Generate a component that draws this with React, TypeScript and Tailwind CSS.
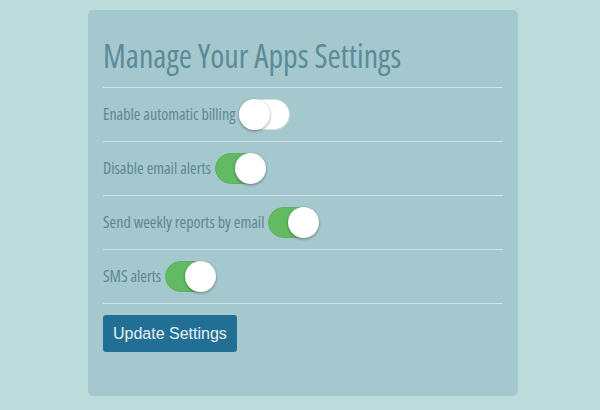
import { useState } from "react";

type Setting = { label: string; on: boolean };

const initial: Setting[] = [
  { label: "Enable automatic billing", on: false },
  { label: "Disable email alerts", on: true },
  { label: "Send weekly reports by email", on: true },
  { label: "SMS alerts", on: true },
];

function Toggle({ on, onClick }: { on: boolean; onClick: () => void }) {
  return (
    <button
      type="button"
      onClick={onClick}
      className={
        on
          ? "relative h-[31px] w-[51px] shrink-0 rounded-full border border-[#5bb25c] bg-[#62bb63]"
          : "relative h-[31px] w-[51px] shrink-0 rounded-full border border-[#dcdcdc] bg-white"
      }
    >
      <span
        className={
          on
            ? "absolute top-[-1px] right-[-1px] h-[31px] w-[31px] rounded-full bg-white shadow-[0_1px_3px_rgba(0,0,0,0.4)]"
            : "absolute top-[-1px] left-[-1px] h-[31px] w-[31px] rounded-full bg-white shadow-[0_1px_3px_rgba(0,0,0,0.4)]"
        }
      />
    </button>
  );
}

export default function App() {
  const [items, setItems] = useState(initial);

  return (
    <div className="min-h-[410px] bg-[#bcdbdb] pt-[10px] pl-[88px]">
      <div className="w-[430px] h-[386px] rounded-[5px] bg-[#a5c8ce] px-[15px] pt-[26px] font-['Open_Sans',sans-serif] [font-stretch:75%]">
        <h2 className="text-[32px] leading-[40px] pb-[11px] text-[#5a8b97] border-b border-[#cfe4e6]">
          Manage Your Apps Settings
        </h2>
        {items.map((it, i) => (
          <div
            key={it.label}
            className="flex items-center gap-[4px] py-[11px] border-b border-[#cfe4e6] text-[16px] leading-[24px] text-[#5d8791]"
          >
            <span className="-mt-[2px]">{it.label}</span>
            <Toggle
              on={it.on}
              onClick={() =>
                setItems(items.map((x, j) => (j === i ? { ...x, on: !x.on } : x)))
              }
            />
          </div>
        ))}
        <button
          type="button"
          className="mt-[11px] h-[37px] rounded-[3px] bg-[#216f94] px-[10px] font-['Liberation_Sans',sans-serif] [font-stretch:normal] text-[16px] text-[#e6f0f2]"
        >
          Update Settings
        </button>
      </div>
    </div>
  );
}
